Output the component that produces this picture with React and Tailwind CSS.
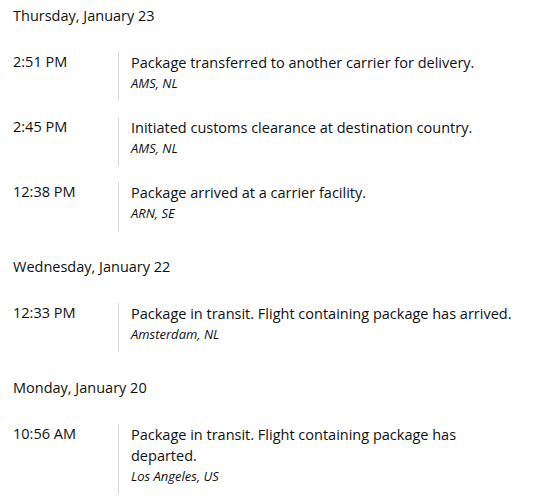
export default function App() {
  const groups = [
    {
      date: "Thursday, January 23",
      rows: [
        ["2:51 PM", "Package transferred to another carrier for delivery.", "AMS, NL"],
        ["2:45 PM", "Initiated customs clearance at destination country.", "AMS, NL"],
        ["12:38 PM", "Package arrived at a carrier facility.", "ARN, SE"],
      ],
    },
    {
      date: "Wednesday, January 22",
      rows: [["12:33 PM", "Package in transit. Flight containing package has arrived.", "Amsterdam, NL"]],
    },
    {
      date: "Monday, January 20",
      rows: [["10:56 AM", "Package in transit. Flight containing package has departed.", "Los Angeles, US"]],
    },
  ];
  return (
    <div
      className="w-[536px] h-[500px] bg-white text-[#0f1111] pl-[13px] pr-[14px] pt-[6px] overflow-hidden"
      style={{ fontFamily: '"Open Sans", sans-serif' }}
    >
      <div className="flex flex-col gap-[26px]">
        {groups.map((g) => (
          <div key={g.date} className="flex flex-col gap-[26px]">
            <div className="text-[14.5px] leading-[20px]">{g.date}</div>
            <div className="flex flex-col gap-[16px]">
              {g.rows.map(([t, d, l]) => (
                <div key={t + d} className="flex">
                  <div className="w-[105px] shrink-0 text-[14.5px] leading-[20px]">{t}</div>
                  <div className="flex-1 border-l border-[#d5d9d9] pl-[12px] pb-[8px]">
                    <div className="text-[14.5px] leading-[21px]">{d}</div>
                    <div className="text-[13px] leading-[20px] italic">{l}</div>
                  </div>
                </div>
              ))}
            </div>
          </div>
        ))}
      </div>
    </div>
  );
}
